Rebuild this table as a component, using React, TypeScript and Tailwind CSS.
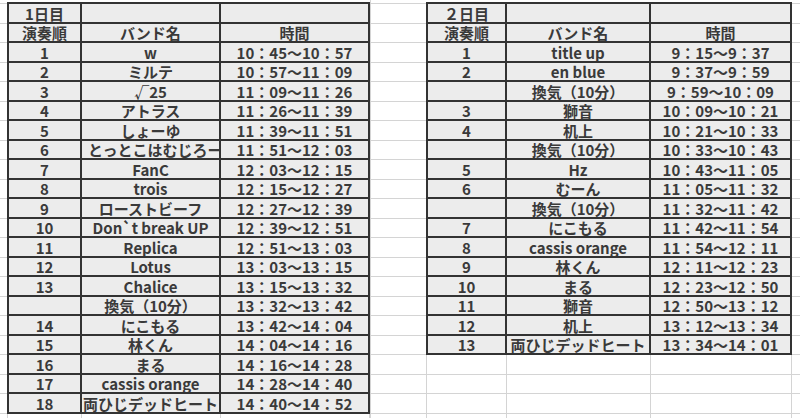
import React from 'react';

type Row = [string, string, string];

const leftRows: Row[] = [
  ['1', 'w', '10：45〜10：57'],
  ['2', 'ミルテ', '10：57〜11：09'],
  ['3', '√25', '11：09〜11：26'],
  ['4', 'アトラス', '11：26〜11：39'],
  ['5', 'しょーゆ', '11：39〜11：51'],
  ['6', 'とっとこはむじろー', '11：51〜12：03'],
  ['7', 'FanC', '12：03〜12：15'],
  ['8', 'trois', '12：15〜12：27'],
  ['9', 'ローストビーフ', '12：27〜12：39'],
  ['10', 'Don`t break UP', '12：39〜12：51'],
  ['11', 'Replica', '12：51〜13：03'],
  ['12', 'Lotus', '13：03〜13：15'],
  ['13', 'Chalice', '13：15〜13：32'],
  ['', '換気（10分）', '13：32〜13：42'],
  ['14', 'にこもる', '13：42〜14：04'],
  ['15', '林くん', '14：04〜14：16'],
  ['16', 'まる', '14：16〜14：28'],
  ['17', 'cassis orange', '14：28〜14：40'],
  ['18', '両ひじデッドヒート', '14：40〜14：52'],
];

const rightRows: Row[] = [
  ['1', 'title up', '9：15〜9：37'],
  ['2', 'en blue', '9：37〜9：59'],
  ['', '換気（10分）', '9：59〜10：09'],
  ['3', '獅音', '10：09〜10：21'],
  ['4', '机上', '10：21〜10：33'],
  ['', '換気（10分）', '10：33〜10：43'],
  ['5', 'Hz', '10：43〜11：05'],
  ['6', 'むーん', '11：05〜11：32'],
  ['', '換気（10分）', '11：32〜11：42'],
  ['7', 'にこもる', '11：42〜11：54'],
  ['8', 'cassis orange', '11：54〜12：11'],
  ['9', '林くん', '12：11〜12：23'],
  ['10', 'まる', '12：23〜12：50'],
  ['11', '獅音', '12：50〜13：12'],
  ['12', '机上', '13：12〜13：34'],
  ['13', '両ひじデッドヒート', '13：34〜14：01'],
];

const cellBase =
  'h-full shrink-0 border-r-2 border-b-2 border-[#333] bg-[#ececec] flex items-center overflow-hidden whitespace-nowrap';

function Cell({ w, text, left }: { w: string; text: string; left?: boolean }) {
  return (
    <div className={`${cellBase} ${w} ${left ? 'justify-start pl-[6px]' : 'justify-center'}`}>
      <span className="leading-[17px] pt-[1px]">{text}</span>
    </div>
  );
}

function Table({
  title,
  rows,
  widths,
}: {
  title: string;
  rows: Row[];
  widths: [string, string, string];
}) {
  const all: Row[] = [[title, '', ''], ['演奏順', 'バンド名', '時間'], ...rows];
  return (
    <div className="flex flex-col border-l-2 border-t-2 border-[#333]">
      {all.map((r, i) => (
        <div key={i} className="flex h-[19.5px]">
          <Cell w={widths[0]} text={r[0]} />
          <Cell w={widths[1]} text={r[1]} left={r[1] === 'とっとこはむじろー'} />
          <Cell w={widths[2]} text={r[2]} />
        </div>
      ))}
    </div>
  );
}

function GapCol({ w, left }: { w: string; left?: boolean }) {
  const cells = Array.from({ length: 22 });
  return (
    <div className={`${w} shrink-0 flex flex-col ${left ? 'border-l border-[#d4d4d4]' : ''}`}>
      <div className="h-[4px] shrink-0 border-b border-[#d4d4d4]" />
      {cells.map((_, i) => (
        <div key={i} className="h-[19.5px] shrink-0 border-b border-[#d4d4d4]" />
      ))}
    </div>
  );
}

function GridRows({ n, widths }: { n: number; widths: string[] }) {
  return (
    <>
      {Array.from({ length: n }).map((_, i) => (
        <div key={i} className="flex h-[19.5px] shrink-0">
          {widths.map((w, j) => (
            <div
              key={j}
              className={`${w} h-full shrink-0 border-r border-b border-[#d4d4d4] ${j === 0 ? 'border-l' : ''}`}
            />
          ))}
        </div>
      ))}
    </>
  );
}

export default function App() {
  return (
    <div className="w-[800px] h-[418px] bg-white overflow-hidden flex items-start font-['Noto_Sans_CJK_JP','Noto_Sans',sans-serif] text-[15px] font-bold text-[#3a3a3a]">
      <GapCol w="w-[7px]" />
      <div className="flex flex-col shrink-0 mt-[2px]">
        <Table title="1日目" rows={leftRows} widths={['w-[73px]', 'w-[139px]', 'w-[149px]']} />
        <GridRows n={2} widths={['w-[75px]', 'w-[139px]', 'w-[149px]']} />
      </div>
      <GapCol w="w-[56px]" left />
      <div className="flex flex-col shrink-0 mt-[2px]">
        <Table title="２日目" rows={rightRows} widths={['w-[79px]', 'w-[144px]', 'w-[141px]']} />
        <GridRows n={5} widths={['w-[81px]', 'w-[144px]', 'w-[141px]']} />
      </div>
      <GapCol w="w-[8px]" />
    </div>
  );
}
